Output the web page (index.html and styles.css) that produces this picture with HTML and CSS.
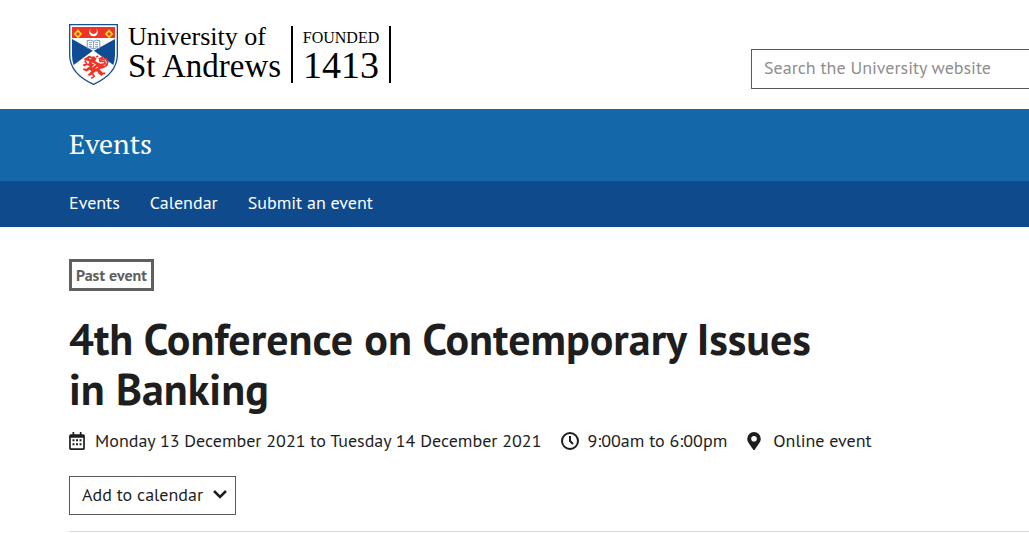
FILE: index.html
```html
<!DOCTYPE html>
<html lang="en">
<head>
    <meta charset="UTF-8">
    <meta name="viewport" content="width=device-width, initial-scale=1.0">
    <title>4th Conference on Contemporary Issues in Banking</title>
    <link rel="stylesheet" href="styles.css">
</head>
<body>
    <!-- Logo and search -->
    <header class="site-header">
        <a class="logo" href="#">
            <svg class="crest" viewBox="27 27 148 184" aria-hidden="true">
                <path d="M29 29H173V122Q171 178 101 209Q31 178 29 122Z" fill="#fff" stroke="#174f91" stroke-width="4"/>
                <path d="M36 36H166V69H36Z" fill="#ee3426"/>
                <path d="M36 72L99 108L41 151Q36 137 36 120Z" fill="#0f4c94"/>
                <path d="M166 72L102 108L161 151Q166 137 166 120Z" fill="#0f4c94"/>
                <path d="M54 43L67 57L54 70L41 57ZM148 43L161 57L148 70L135 57Z" fill="#ffd51f"/>
                <path d="M54 51L60 57L54 63L48 57ZM148 51L154 57L148 63L142 57Z" fill="#ee3426"/>
                <path d="M93 41A13 13 0 1 0 109 41A10 10 0 1 1 93 41Z" fill="#fff"/>
                <path d="M82 77Q92 74 101 79Q110 74 120 77V101Q110 97 101 102Q92 97 82 101Z" fill="#fff" stroke="#32669d" stroke-width="2"/>
                <path d="M101 79V101M87 83H96M106 83H115M87 89H96M106 89H115M87 95H96M106 95H115" stroke="#52749a" stroke-width="2" fill="none"/>
                <path d="M79 128L88 122L95 126L103 124L110 132L106 139L114 144L126 148L134 154L129 161L119 163L126 171L132 178L125 184L117 178L113 170L106 171L99 177L91 183L82 182L90 174L95 169L89 165L80 170L73 167L82 160L90 155L82 151L73 155L68 150L80 145L86 147L89 141L81 137L76 139L72 132Z" fill="#ee3426"/>
                <path d="M125 149L137 147L134 139L121 140L119 132L128 128L126 134L139 132L144 142L141 152L129 158M109 127L115 123M80 144L74 139M96 174L103 185L94 191M79 165L70 163M124 176L137 176" fill="none" stroke="#ee3426" stroke-width="5"/>
                <path d="M88 131H94M96 144L107 150L97 157M107 161L115 157" fill="none" stroke="#fff" stroke-width="3"/>
            </svg>
            <span class="logo-name">
                <span class="logo-university">University of</span>
                <span class="logo-town">St Andrews</span>
            </span>
            <span class="logo-founded">
                <span class="founded-label">FOUNDED</span>
                <span class="founded-year">1413</span>
            </span>
        </a>
        <input class="search" type="search" placeholder="Search the University website" aria-label="Search the University website">
    </header>

    <!-- Section banner and navigation -->
    <div class="banner">
        <a class="banner-title" href="#">Events</a>
    </div>
    <nav class="nav">
        <a href="#">Events</a>
        <a href="#">Calendar</a>
        <a href="#">Submit an event</a>
    </nav>

    <!-- Event details -->
    <main class="event">
        <span class="badge">Past event</span>
        <h1 class="event-title">4th Conference on Contemporary Issues in Banking</h1>
        <div class="event-meta">
            <span class="meta-item">
                <svg class="icon-calendar" viewBox="0 0 448 512" aria-hidden="true">
                    <path fill-rule="evenodd" d="M96 0h48v64h160V0h48v64h48c26 0 48 22 48 48v352c0 26-22 48-48 48H48c-26 0-48-22-48-48V112c0-26 22-48 48-48h48ZM48 160v304h352V160Z"/>
                    <path d="M96 208h56v56H96ZM196 208h56v56h-56ZM296 208h56v56h-56ZM96 320h56v56H96ZM196 320h56v56h-56ZM296 320h56v56h-56Z"/>
                </svg>
                Monday 13 December 2021 to Tuesday 14 December 2021
            </span>
            <span class="meta-item">
                <svg class="icon-clock" viewBox="0 0 18 18" aria-hidden="true">
                    <circle cx="9" cy="9" r="8" fill="none" stroke="currentColor" stroke-width="2"/>
                    <path d="M9 4V9L12 12" fill="none" stroke="currentColor" stroke-width="2"/>
                </svg>
                9:00am to 6:00pm
            </span>
            <span class="meta-item">
                <svg class="icon-pin" viewBox="0 0 384 512" aria-hidden="true">
                    <path fill-rule="evenodd" d="M172 502C27 291 0 270 0 192a192 192 0 0 1 384 0c0 78-27 99-172 310a24 24 0 0 1-40 0ZM192 272a80 80 0 1 0 0-160 80 80 0 0 0 0 160Z"/>
                </svg>
                Online event
            </span>
        </div>
        <button class="calendar-button" type="button">
            Add to calendar
            <svg class="icon-chevron" viewBox="0 0 14 9" aria-hidden="true">
                <path d="M1 1L7 7L13 1" fill="none" stroke="currentColor" stroke-width="2.5"/>
            </svg>
        </button>
        <hr class="divider">
    </main>
</body>
</html>
```
FILE: styles.css
```css
* {
    box-sizing: border-box;
}
body {
    margin: 0;
    font-family: "PT Sans", Lato, sans-serif;
    font-size: 18px;
    line-height: 24px;
    color: #1e1e1e;
    background-color: #fff;
}
a {
    color: inherit;
    text-decoration: none;
}
svg {
    flex: none;
    fill: currentColor;
}
.site-header {
    display: flex;
    justify-content: space-between;
    align-items: flex-start;
    height: 109px;
    padding: 24px 0 0 69px;
}
.logo {
    display: flex;
    font-family: Palatino, "Liberation Serif", serif;
    color: #000;
}
.crest {
    width: 49px;
    height: 61px;
    margin-right: 10px;
}
.logo-name {
    display: flex;
    flex-direction: column;
    width: 163px;
    white-space: nowrap;
}
.logo-university {
    font-size: 26px;
    line-height: 26px;
}
.logo-town {
    font-size: 33px;
    line-height: 32px;
}
.logo-founded {
    display: flex;
    flex-direction: column;
    align-items: center;
    width: 100px;
    height: 57px;
    margin-top: 2px;
    border: solid #000;
    border-width: 0 2px;
}
.founded-label {
    font-size: 16px;
    line-height: 24px;
}
.founded-year {
    font-size: 38px;
    line-height: 30px;
}
.search {
    width: 278px;
    height: 40px;
    margin-top: 25px;
    padding: 0 12px 4px;
    border: 1px solid #5a5a5a;
    border-right: 0;
    border-radius: 0;
    font: inherit;
    appearance: none;
}
.search::placeholder {
    color: #8e8e8e;
}
.banner {
    padding: 17px 69px 19px;
    background-color: #1468aa;
    color: #fff;
}
.banner-title {
    display: block;
    font-family: "PT Serif", "Noto Serif", "Liberation Serif", serif;
    font-size: 28px;
    line-height: 36px;
}
.nav {
    display: flex;
    gap: 30px;
    padding: 10px 69px 12px;
    background-color: #0e4a8c;
    color: #fff;
}
.event {
    padding: 32px 0 0 69px;
}
.badge {
    display: block;
    width: fit-content;
    padding: 1px 4px;
    border: 3px solid #5f5f5f;
    font-size: 16px;
    font-weight: bold;
    color: #5f5f5f;
}
.event-title {
    max-width: 780px;
    margin: 23px 0 15px;
    font-size: 44px;
    line-height: 50px;
}
.event-meta {
    display: flex;
    gap: 20px;
    white-space: nowrap;
}
.meta-item {
    display: flex;
    align-items: center;
}
.icon-calendar {
    width: 16px;
    height: 18px;
    margin-right: 10px;
}
.icon-clock {
    width: 18px;
    height: 18px;
    margin-right: 8px;
}
.icon-pin {
    width: 14px;
    height: 18px;
    margin-right: 12px;
}
.calendar-button {
    display: flex;
    align-items: center;
    gap: 10px;
    height: 39px;
    margin-top: 23px;
    padding: 0 8px 2px 12px;
    border: 1px solid #5a5a5a;
    background-color: #fff;
    font: inherit;
    color: inherit;
}
.icon-chevron {
    width: 14px;
    height: 9px;
}
.divider {
    margin: 16px 0 0;
    border: 0;
    border-top: 1px solid #d9d9d9;
}
```
